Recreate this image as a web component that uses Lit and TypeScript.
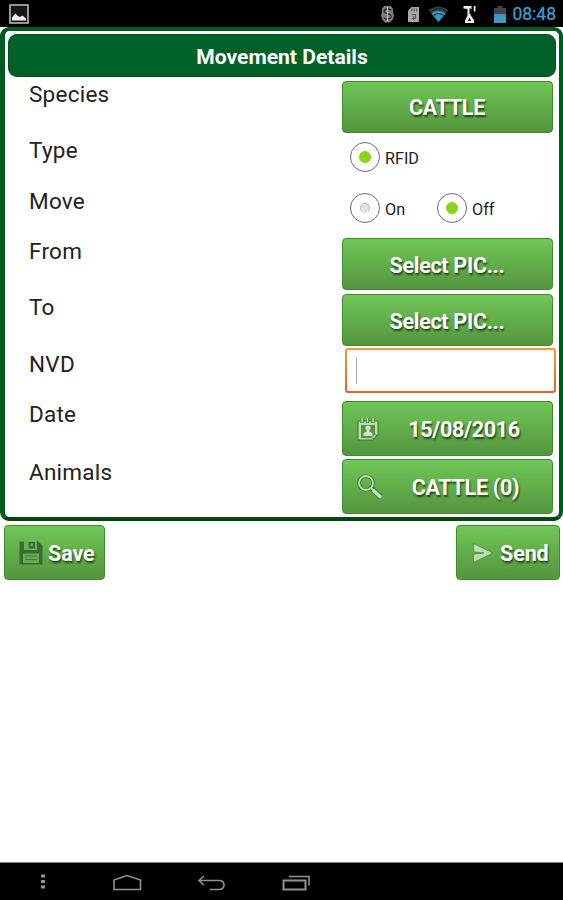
import { LitElement, html, css, svg, nothing } from "lit";
import { customElement, property } from "lit/decorators.js";

const icons = {
  picture: svg`<svg width="20" height="20" viewBox="0 0 20 20"><rect x="1" y="1" width="18" height="18" fill="#181818" stroke="#b8b8b8" stroke-width="1.6"/><path d="M3 16.5V13.500L6.500 9.500L9 12l2 1 2.5-1.5 3.5 3v2z" fill="#eee"/></svg>`,
  debug: svg`<svg width="13" height="18" viewBox="0 0 13 18"><path d="M3.500 1h6L12 3.500V8l1 2-1 4-3 3.500H4L1 14 0 10l1-2V3.500z" fill="#808080"/><path d="M10 5.500Q9.500 4 6.500 4T3 6.300Q3 8 6.500 8.700T10 11.500Q10 14 6.500 14T3 12.300" fill="none" stroke="#2c2c2c" stroke-width="1.300"/><path d="M6.500 2v14" stroke="#c4c4c4" stroke-width="1"/></svg>`,
  card: svg`<svg width="11" height="15" viewBox="0 0 11 15"><path d="M3.500 0H11V15H0V4z" fill="#a8a8a8"/><path d="M4 1.500v3M6.300 1.500v3M8.600 1.500v3M3.500 7.500h4v4h-4M5.500 9v4" stroke="#555" stroke-width="1.100" fill="none"/></svg>`,
  wifi: svg`<svg width="21" height="16" viewBox="0 0 20 16"><path d="M0 4Q10-3 20 4L10 16z" fill="#3a3e46"/><path d="M3 7.500Q10 2 17 7.500L10 16z" fill="#2f9bc8"/><path d="M1.500 5.500Q10-.5 18.500 5.500M5 9.500q5-4 10 0" fill="none" stroke="#17313d" stroke-width="1.200"/></svg>`,
  signal: svg`<svg width="13" height="18" viewBox="0 0 13 18"><path d="M.5 1h8v3l-2-.8V8.500l4.500 6.500v3H2v-2.500l2.500-5V4l-4-.5zM10.800 1h1.700v5.500h-1.700z" fill="#eee"/><path d="M6.500 12.500l-1.700 3.500h3.400z" fill="#222"/></svg>`,
  battery: svg`<svg width="12" height="17" viewBox="0 0 12 17"><path d="M3.500 0h5v2H12v7H0V2h3.500z" fill="#404448"/><path d="M0 8h12v9H0z" fill="#369ac4"/></svg>`,
  calendar: svg`<svg width="22" height="24" viewBox="0 0 22 24"><path d="M1 4h20v14l-5 5H1z" fill="#b7dbab" stroke="#3d7a30" stroke-width="1"/><path d="M4 8h14v10h-3v3H4z" fill="#55933f"/><path d="M11 8.500a2.500 2.500 0 0 1 1.300 4.700v1.300l3.200 1.500v3H6.500v-3l3.200-1.500v-1.300A2.500 2.500 0 0 1 11 8.500z" fill="#cde7c4"/><path d="M5 1v5M10.500 1v5M16 1v5" stroke="#3d7a30" stroke-width="3"/><path d="M5 1v4.500M10.500 1v4.500M16 1v4.500" stroke="#c2e2b7" stroke-width="1.500"/><path d="M16 22v-4h4z" fill="#d8edd0" stroke="#3d7a30" stroke-width=".7"/></svg>`,
  search: svg`<svg width="25" height="25" viewBox="0 0 25 25"><circle cx="9" cy="9" r="7" fill="none" stroke="#3d7a30" stroke-width="3.600"/><path d="M14 14l9 8.500" stroke="#3d7a30" stroke-width="5.400" stroke-linecap="round"/><circle cx="9" cy="9" r="7" fill="none" stroke="#bcdcb1" stroke-width="1.800"/><path d="M13.800 13.800l3 2.800" stroke="#bcdcb1" stroke-width="1.800"/><path d="M17 17l6 5.500" stroke="#c9e5bf" stroke-width="3.600" stroke-linecap="round"/></svg>`,
  save: svg`<svg width="24" height="24" viewBox="0 0 24 24"><path d="M.5.5h18.800L23.500 4.500v19H.5z" fill="#3d6c33"/><path d="M5 0h13v9H5z" fill="#6bb256"/><path d="M9.500 1h6.500v6.500H9.500z" fill="#3d6c33"/><path d="M11.500 2.500h2.500V5h-2.500z" fill="#6bb256"/><path d="M4 12.500h16V22H4z" fill="#67aa52"/><path d="M6 15h12M6 18.500h12" stroke="#48813b" stroke-width="1"/></svg>`,
  send: svg`<svg width="22" height="20" viewBox="0 0 22 20"><path d="M1.500.5L21 10 1.500 19.500V11.200L12 10 1.500 8.800z" fill="#bcdcb1" stroke="#4d8b3c" stroke-width=".8"/></svg>`,
};

@customElement("green-button")
class GreenButton extends LitElement {
  @property() label = "";
  @property() icon = "";
  static styles = css`
    :host { display: block; height: 100%; }
    .face {
      box-sizing: border-box; width: 100%; height: 100%;
      display: flex; align-items: center;
      padding: 0 3px 0 14px;
      border: 1.5px solid #3f8d28; border-radius: 4px;
      background: linear-gradient(#70c656, #54953f);
      color: #fff; font: 700 21.5px/26px Roboto, sans-serif;
      letter-spacing: -0.3px;
      text-shadow: 1px 1.5px 2px #1c4711;
    }
    .label { flex: 1; text-align: center; white-space: nowrap; padding-top: 2px; }
    :host(.plain) .face { padding: 0 1px 0 0; }
    :host(.low) .label { padding-top: 3px; }
    .icon { display: flex; }
    :host(.tight) .label { flex: none; margin-left: 5px; letter-spacing: -0.1px; }
    :host(.send) .face { padding-left: 15px; }
    :host(.send) .label { margin-left: 6px; }
  `;
  render() {
    return html`<div class="face">
      ${this.icon ? html`<span class="icon">${icons[this.icon as keyof typeof icons]}</span>` : nothing}
      <span class="label">${this.label}</span>
    </div>`;
  }
}

@customElement("radio-option")
class RadioOption extends LitElement {
  @property() label = "";
  @property({ type: Boolean }) checked = false;
  static styles = css`
    :host { display: flex; align-items: center; gap: 5px; font: 16.2px/20px Roboto, sans-serif; color: #222; }
    .ring {
      box-sizing: border-box; width: 30px; height: 30px; border-radius: 50%;
      border: 1.5px solid #6e6e6e; display: grid; place-items: center; background: #fff;
    }
    .dot { box-sizing: border-box; width: 10px; height: 10px; border-radius: 50%; border: 1px solid #bbb; border-bottom-color: #ddd; background: #e4e4e4; }
    .dot.on { width: 12px; height: 12px; border-color: #8bd02a; background: #86d810; }
    .label { padding-top: 4px; }
  `;
  render() {
    return html`<span class="ring"><span class="dot ${this.checked ? "on" : ""}"></span></span><span class="label">${this.label}</span>`;
  }
}

@customElement("app-root")
class AppRoot extends LitElement {
  static styles = css`
    :host { display: flex; flex-direction: column; height: 900px; width: 563px; background: #fff; font-family: Roboto, sans-serif; overflow: hidden; }
    .status { height: 27px; flex: none; background: #000; display: flex; align-items: center; box-sizing: border-box; padding: 0 7px 0 9px; }
    .status svg { display: block; }
    .tray { margin-left: auto; display: flex; align-items: center; padding-top: 1px; }
    .gap-a { margin-right: 14px; }
    .gap-b { margin-right: 9px; }
    .gap-c { margin-right: 14px; }
    .gap-d { margin-right: 18px; }
    .gap-e { margin-right: 6px; }
    .clock { color: #3a9fca; font-size: 17.5px; line-height: 20px; -webkit-text-stroke: 0.3px #3a9fca; }
    .panel { box-sizing: border-box; height: 494px; flex: none; border: 4px solid #005a20; border-left-width: 5px; border-bottom-color: #00480f; border-radius: 9px; padding: 3px 3px 0; }
    .title { box-sizing: border-box; height: 43px; border: 1px solid #00501c; border-radius: 9px; background: #006128; color: #fff; font-weight: 700; font-size: 21.1px; line-height: 43px; text-align: center; }
    .rows { display: grid; grid-template-columns: 334px 210px; grid-template-rows: 56px 51px 50px 56px 57px 50px 58px 58px; padding-top: 4px; }
    .name { padding-left: 21px; font-size: 22.5px; line-height: 26px; color: #222; letter-spacing: 0.25px; }
    .cell { display: flex; align-items: flex-start; }
    .cell green-button { width: 211px; flex: none; height: 52px; }
    .cell green-button.tall { height: 55px; }
    .radios { padding-left: 8px; padding-top: 5px; box-sizing: border-box; }
    .radios .wide { width: 87px; }
    .entry { box-sizing: border-box; flex: none; width: 211px; height: 45px; margin: -3px 0 0 3px; padding: 2px; border-radius: 3px; background: linear-gradient(#f79a35, #e8602a); display: flex; }
    .inner { flex: 1; background: #fff; border-radius: 1px; display: flex; align-items: center; padding-left: 9px; }
    .caret { width: 1px; height: 26px; background: #aaa; }
    .actions { display: flex; justify-content: space-between; padding: 4px 3px 0 4px; height: 55px; flex: none; }
    .actions .save { width: 101px; }
    .actions .send { width: 104px; }
    .nav { margin-top: auto; height: 38px; flex: none; box-sizing: border-box; background: #000; border-top: 1px solid #888; }
    .nav svg { display: block; }
  `;
  render() {
    return html`
      <div class="status">
        ${icons.picture}
        <div class="tray">
          <span class="gap-a">${icons.debug}</span><span class="gap-b">${icons.card}</span>
          <span class="gap-c">${icons.wifi}</span><span class="gap-d">${icons.signal}</span>
          <span class="gap-e">${icons.battery}</span><span class="clock">08:48</span>
        </div>
      </div>
      <div class="panel">
        <div class="title">Movement Details</div>
        <div class="rows">
          <div class="name">Species</div>
          <div class="cell"><green-button class="plain" label="CATTLE"></green-button></div>
          <div class="name">Type</div>
          <div class="cell radios"><radio-option label="RFID" checked></radio-option></div>
          <div class="name">Move</div>
          <div class="cell radios"><radio-option class="wide" label="On"></radio-option><radio-option label="Off" checked></radio-option></div>
          <div class="name">From</div>
          <div class="cell"><green-button class="plain low" label="Select PIC..."></green-button></div>
          <div class="name">To</div>
          <div class="cell"><green-button class="plain low" label="Select PIC..."></green-button></div>
          <div class="name">NVD</div>
          <div class="cell"><div class="entry"><div class="inner"><span class="caret"></span></div></div></div>
          <div class="name">Date</div>
          <div class="cell"><green-button class="tall" icon="calendar" label="15/08/2016"></green-button></div>
          <div class="name">Animals</div>
          <div class="cell"><green-button class="tall" icon="search" label="CATTLE (0)"></green-button></div>
        </div>
      </div>
      <div class="actions">
        <green-button class="tight save" icon="save" label="Save"></green-button>
        <green-button class="tight send" icon="send" label="Send"></green-button>
      </div>
      <div class="nav">
        <svg width="563" height="36" viewBox="0 0 563 36" fill="none" stroke="#929292" stroke-width="1.600">
          <path d="M41 13h4M41 18.500h4M41 24h4" stroke-width="3"/>
          <path d="M114 26.500V17L127 12.500 140.500 17V26.500z"/>
          <path d="M204 13l-5 4.500 5 4.500M199.500 17.500H219q5 0 5 4.500t-5 4.500h-9"/>
          <path d="M283.500 17.500h22v9h-22z" stroke-width="2"/><path d="M289 13.500h20v9"/>
        </svg>
      </div>`;
  }
}
